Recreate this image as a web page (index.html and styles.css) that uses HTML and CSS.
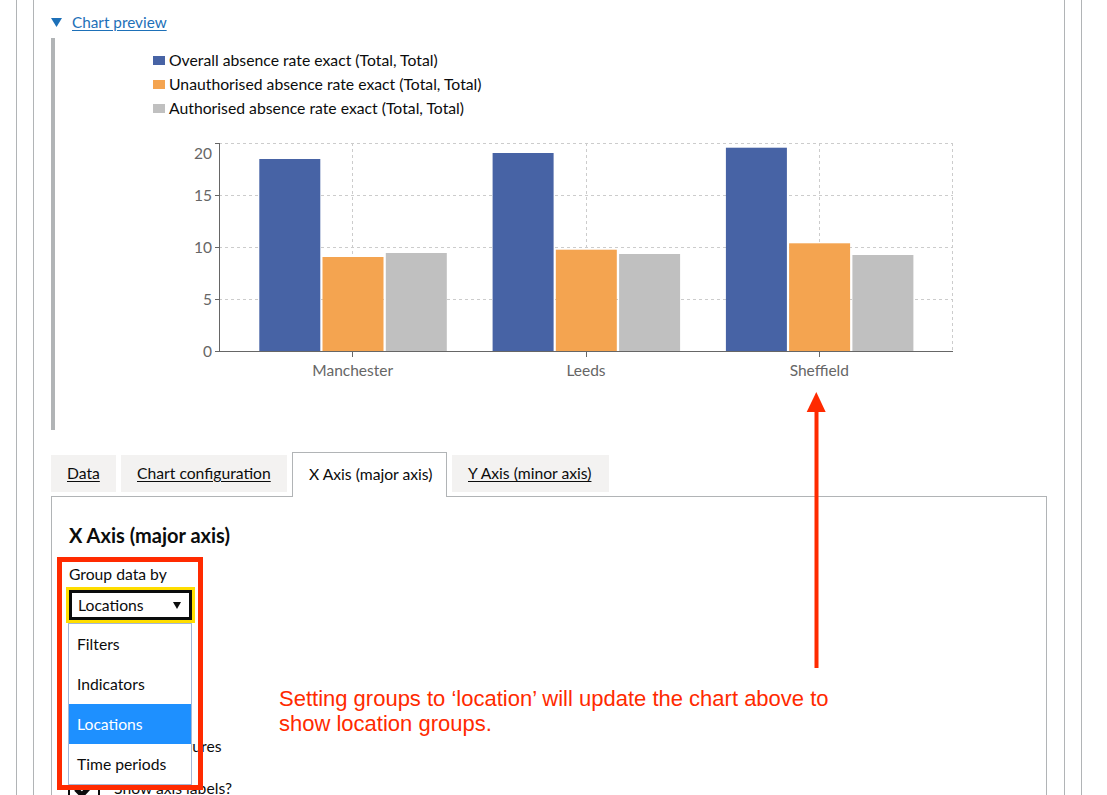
FILE: index.html
```html
<!DOCTYPE html>
<html lang="en">
<head>
<meta charset="utf-8">
<title>Chart builder – X Axis</title>
<link rel="stylesheet" href="styles.css">
</head>
<body>
<div class="outer">
  <div class="inner">
    <div class="summary">
      <svg class="caret" width="11" height="9" viewBox="0 0 11 9"><polygon points="0,0 11,0 5.5,9" fill="#1d70b8"/></svg>
      <a class="summary-link" href="#">Chart preview</a>
    </div>
    <div class="details-body">
      <ul class="legend">
        <li><span class="swatch swatch-blue"></span>Overall absence rate exact (Total, Total)</li>
        <li><span class="swatch swatch-orange"></span>Unauthorised absence rate exact (Total, Total)</li>
        <li><span class="swatch swatch-grey"></span>Authorised absence rate exact (Total, Total)</li>
      </ul>
      <svg class="chart" width="820" height="260" viewBox="0 0 820 260">
        <g class="grid" stroke="#ccc" stroke-dasharray="3 3" fill="none">
          <line x1="59" y1="13.5" x2="793" y2="13.5"/>
          <line x1="59" y1="65.5" x2="793" y2="65.5"/>
          <line x1="59" y1="117.5" x2="793" y2="117.5"/>
          <line x1="59" y1="169.5" x2="793" y2="169.5"/>
          <line x1="192.5" y1="13" x2="192.5" y2="221"/>
          <line x1="426.5" y1="13" x2="426.5" y2="221"/>
          <line x1="659.5" y1="13" x2="659.5" y2="221"/>
          <line x1="792.5" y1="13" x2="792.5" y2="221"/>
        </g>
        <g class="bars">
          <rect x="99.3" y="29" width="61" height="192" fill="#4763a5"/>
          <rect x="162.5" y="127" width="61" height="94" fill="#f4a450"/>
          <rect x="225.8" y="123" width="61" height="98" fill="#c0c0c0"/>
          <rect x="332.6" y="23" width="61" height="198" fill="#4763a5"/>
          <rect x="395.8" y="119.7" width="61" height="101.3" fill="#f4a450"/>
          <rect x="459.1" y="124" width="61" height="97" fill="#c0c0c0"/>
          <rect x="565.9" y="17.7" width="61" height="203.3" fill="#4763a5"/>
          <rect x="629.1" y="113.3" width="61" height="107.7" fill="#f4a450"/>
          <rect x="692.4" y="125" width="61" height="96" fill="#c0c0c0"/>
        </g>
        <g class="axes" stroke="#666" fill="none">
          <line x1="59.5" y1="13" x2="59.5" y2="221.5"/>
          <line x1="59" y1="221.5" x2="793" y2="221.5"/>
          <line x1="55" y1="13.5" x2="59" y2="13.5"/>
          <line x1="55" y1="65.5" x2="59" y2="65.5"/>
          <line x1="55" y1="117.5" x2="59" y2="117.5"/>
          <line x1="55" y1="169.5" x2="59" y2="169.5"/>
          <line x1="55" y1="221.5" x2="59" y2="221.5"/>
          <line x1="192.5" y1="221" x2="192.5" y2="227"/>
          <line x1="426.5" y1="221" x2="426.5" y2="227"/>
          <line x1="659.5" y1="221" x2="659.5" y2="227"/>
        </g>
        <g class="ticks" fill="#666" text-anchor="end">
          <text x="52" y="28.5">20</text>
          <text x="52" y="71">15</text>
          <text x="52" y="122.5">10</text>
          <text x="52" y="175">5</text>
          <text x="52" y="227">0</text>
        </g>
        <g class="ticks" fill="#666" text-anchor="middle">
          <text x="192.7" y="245.5">Manchester</text>
          <text x="426" y="245.5">Leeds</text>
          <text x="659.3" y="245.5">Sheffield</text>
        </g>
      </svg>
    </div>

    <div class="tabs">
      <a class="tab tab-data" href="#">Data</a>
      <a class="tab tab-config" href="#">Chart configuration</a>
      <span class="tab tab-selected">X Axis (major axis)</span>
      <a class="tab tab-y" href="#">Y Axis (minor axis)</a>
    </div>
    <div class="panel">
      <h2 class="panel-heading">X Axis (major axis)</h2>
      <div class="field-label">Group data by</div>
      <div class="select-wrap">
        <div class="select">
          <span>Locations</span>
          <svg class="select-arrow" width="8" height="7" viewBox="0 0 8 7"><polygon points="0,0 8,0 4,7" fill="#0b0c0c"/></svg>
        </div>
        <ul class="dropdown">
          <li>Filters</li>
          <li>Indicators</li>
          <li class="is-active">Locations</li>
          <li>Time periods</li>
        </ul>
      </div>
      <div class="checks">
        <div class="check-row">
          <span class="checkbox"></span>
          <span class="check-label">Show all figures</span>
        </div>
        <div class="check-row">
          <span class="checkbox">
            <svg width="30" height="30" viewBox="0 0 30 30"><path d="M6 15 L12 21 L24 8" stroke="#0b0c0c" stroke-width="5" fill="none"/></svg>
          </span>
          <span class="check-label">Show axis labels?</span>
        </div>
      </div>
    </div>
  </div>
</div>

<div class="annot-box"></div>
<p class="annot-text">Setting groups to ‘location’ will update the chart above to<br>show location groups.</p>
<svg class="annot-arrow" width="21" height="280" viewBox="0 0 21 280">
  <line x1="10.5" y1="20" x2="10.5" y2="278" stroke="#ff2a00" stroke-width="4"/>
  <polygon points="0.7,22 10.3,2 19.7,22" fill="#ff2a00"/>
</svg>
</body>
</html>
```

FILE: styles.css
```css
* {
  box-sizing: border-box;
}

body {
  margin: 0;
  font-family: Lato, "Liberation Sans", Arial, sans-serif;
  color: #0b0c0c;
  background: #ffffff;
  overflow: hidden;
}

.outer {
  margin-left: 16px;
  width: 1066px;
  height: 795px;
  border-left: 1px solid #b1b4b6;
  border-right: 1px solid #b1b4b6;
  padding: 0 16px;
  overflow: hidden;
}

.inner {
  height: 795px;
  border-left: 1px solid #b1b4b6;
  border-right: 1px solid #b1b4b6;
  padding: 10px 17px 0 17px;
}

.summary {
  display: flex;
  align-items: center;
  height: 24px;
  gap: 10px;
  font-size: 15.3px;
}

.caret {
  display: block;
  margin-top: 1px;
}

.summary-link {
  color: #1d70b8;
  text-decoration: underline;
  text-underline-offset: 2px;
}

.details-body {
  margin-top: 4px;
  height: 392px;
  border-left: 4px solid #b1b4b6;
  padding-top: 10px;
}

.legend {
  list-style: none;
  margin: 0 0 0 98px;
  padding: 0;
  font-size: 15.75px;
  line-height: 24px;
}

.legend li {
  display: flex;
  align-items: center;
}

.swatch {
  display: inline-block;
  width: 12px;
  height: 9px;
  margin-right: 4px;
}

.swatch-blue { background: #4763a5; }
.swatch-orange { background: #f4a450; }
.swatch-grey { background: #c0c0c0; }

.chart {
  display: block;
  margin: 10px 0 0 105px;
  font-family: Lato, "Liberation Sans", Arial, sans-serif;
  font-size: 15.5px;
}

.tabs {
  display: flex;
  align-items: flex-start;
  margin-top: 22px;
}

.tab {
  display: block;
  height: 37px;
  margin-top: 3px;
  margin-right: 5px;
  padding: 0 16px;
  background: #f3f2f1;
  color: #0b0c0c;
  font-size: 15.7px;
  line-height: 37px;
  text-decoration: underline;
  text-underline-offset: 2px;
  white-space: nowrap;
}

.tab-data { width: 65px; }
.tab-config { width: 166px; }
.tab-y { width: 157px; }

.tab-selected {
  width: 155px;
  height: 45px;
  margin-top: 0;
  margin-bottom: -1px;
  background: #ffffff;
  border: 1px solid #b1b4b6;
  border-bottom: none;
  line-height: 42px;
  text-decoration: none;
  position: relative;
  z-index: 1;
}

.panel {
  width: 996px;
  height: 320px;
  border: 1px solid #b1b4b6;
  padding: 24px 17px 0 17px;
}

.panel-heading {
  margin: 0 0 15px 0;
  font-size: 20px;
  line-height: 28px;
  font-weight: 700;
}

.field-label {
  font-size: 15.7px;
  line-height: 20px;
  margin-bottom: 6px;
}

.select-wrap {
  position: relative;
  width: 123px;
}

.select {
  display: flex;
  align-items: center;
  justify-content: space-between;
  width: 123px;
  height: 30px;
  border: 3px solid #0b0c0c;
  outline: 3px solid #ffdd00;
  padding: 0 8px 0 6px;
  font-size: 15.7px;
  background: #ffffff;
}

.dropdown {
  position: absolute;
  left: -1px;
  top: 33px;
  width: 124px;
  margin: 0;
  padding: 0;
  list-style: none;
  background: #ffffff;
  border: 1px solid #a4b6d6;
  z-index: 5;
}

.dropdown li {
  height: 40px;
  line-height: 40px;
  padding-left: 8px;
  font-size: 15.7px;
}

.dropdown li.is-active {
  background: #1e90ff;
  color: #ffffff;
}

.checks {
  margin-top: 110px;
}

.check-row {
  display: flex;
  align-items: center;
  height: 32px;
  margin-bottom: 10px;
  margin-left: -1px;
}

.checkbox {
  display: block;
  width: 32px;
  height: 32px;
  border: 2px solid #0b0c0c;
  margin-right: 14px;
}

.checkbox svg {
  display: block;
}

.check-label {
  font-size: 15.7px;
}

.annot-box {
  position: absolute;
  left: 57px;
  top: 557px;
  width: 146px;
  height: 233px;
  border: 5px solid #ff2a00;
  z-index: 10;
}

.annot-text {
  position: absolute;
  left: 279px;
  top: 686px;
  margin: 0;
  font-family: "Liberation Sans", Arial, sans-serif;
  font-size: 22px;
  line-height: 25px;
  color: #ff2a00;
}

.annot-arrow {
  position: absolute;
  left: 806px;
  top: 390px;
}
```
